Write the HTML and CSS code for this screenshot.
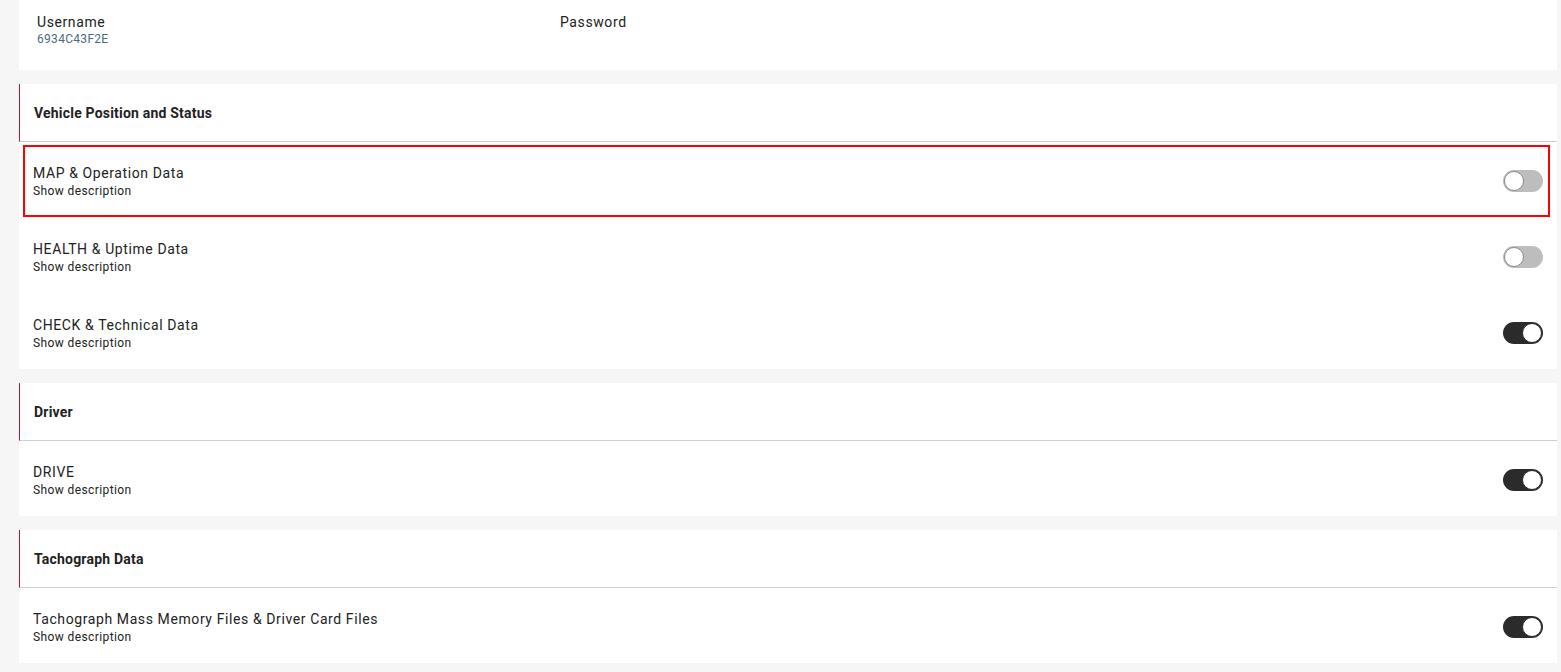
FILE: index.html
```html
<!DOCTYPE html>
<html lang="en">
<head>
  <meta charset="UTF-8" />
  <title>Data Access Settings</title>
  <link rel="stylesheet" href="styles.css">
</head>
<body>
  <div class="page">
    <div class="card credentials">
      <div class="field">
        <div class="field-label">Username</div>
        <div class="field-value">6934C43F2E</div>
      </div>
      <div class="field">
        <div class="field-label">Password</div>
      </div>
    </div>

    <div class="card section">
      <div class="section-head">Vehicle Position and Status</div>
      <div class="item">
        <div class="item-inner selected">
          <div class="item-text">
            <div class="item-title">MAP &amp; Operation Data</div>
            <div class="item-desc">Show description</div>
          </div>
          <span class="toggle"></span>
        </div>
      </div>
      <div class="item">
        <div class="item-inner">
          <div class="item-text">
            <div class="item-title">HEALTH &amp; Uptime Data</div>
            <div class="item-desc">Show description</div>
          </div>
          <span class="toggle"></span>
        </div>
      </div>
      <div class="item">
        <div class="item-inner">
          <div class="item-text">
            <div class="item-title">CHECK &amp; Technical Data</div>
            <div class="item-desc">Show description</div>
          </div>
          <span class="toggle on"></span>
        </div>
      </div>
    </div>

    <div class="card section">
      <div class="section-head">Driver</div>
      <div class="item">
        <div class="item-inner">
          <div class="item-text">
            <div class="item-title">DRIVE</div>
            <div class="item-desc">Show description</div>
          </div>
          <span class="toggle on"></span>
        </div>
      </div>
    </div>

    <div class="card section">
      <div class="section-head">Tachograph Data</div>
      <div class="item">
        <div class="item-inner">
          <div class="item-text">
            <div class="item-title">Tachograph Mass Memory Files &amp; Driver Card Files</div>
            <div class="item-desc">Show description</div>
          </div>
          <span class="toggle on"></span>
        </div>
      </div>
    </div>
  </div>
</body>
</html>
```
FILE: styles.css
```css
html, body {
  margin: 0;
  padding: 0;
  background: #f6f6f6;
  font-family: 'Roboto', 'Liberation Sans', sans-serif;
  color: #222;
}

.page {
  padding: 0 4px 16px 19px;
  display: flex;
  flex-direction: column;
  gap: 14px;
}

.card {
  background: #fff;
}

.credentials {
  display: flex;
  height: 70px;
  padding-left: 18px;
  box-sizing: border-box;
  padding-top: 13px;
}

.field {
  width: 523px;
}

.field-label {
  font-size: 14px;
  line-height: 18px;
  letter-spacing: 0.6px;
}

.field-value {
  font-size: 12px;
  line-height: 16px;
  color: #4d6b7a;
  letter-spacing: 0.3px;
}

.section-head {
  height: 57px;
  display: flex;
  align-items: center;
  padding-left: 14px;
  border-left: 1px solid #c8102e;
  border-bottom: 1px solid #cfcfcf;
  font-size: 14px;
  font-weight: bold;
  letter-spacing: 0.2px;
}

.item {
  padding: 3px 7px 0 4px;
}

.item + .item {
  margin-top: 1px;
}

.item-inner {
  height: 72px;
  box-sizing: border-box;
  border: 2px solid transparent;
  display: flex;
  align-items: center;
  justify-content: space-between;
  padding: 0 5px 0 8px;
}

.item-inner.selected {
  border-color: #ff0000;
}

.item-title {
  font-size: 14px;
  line-height: 19px;
  letter-spacing: 0.6px;
}

.item-desc {
  font-size: 12px;
  line-height: 16px;
  letter-spacing: 0.4px;
}

.toggle {
  position: relative;
  width: 40px;
  height: 22px;
  border-radius: 11px;
  background: #bdbdbd;
  flex-shrink: 0;
}

.toggle::after {
  content: "";
  position: absolute;
  top: 1px;
  left: 1px;
  width: 18px;
  height: 18px;
  border-radius: 50%;
  background: #fff;
  border: 1px solid #8a8a8a;
}

.toggle.on {
  background: #2b2b2b;
}

.toggle.on::after {
  left: 19px;
  border-color: #2b2b2b;
}
```
